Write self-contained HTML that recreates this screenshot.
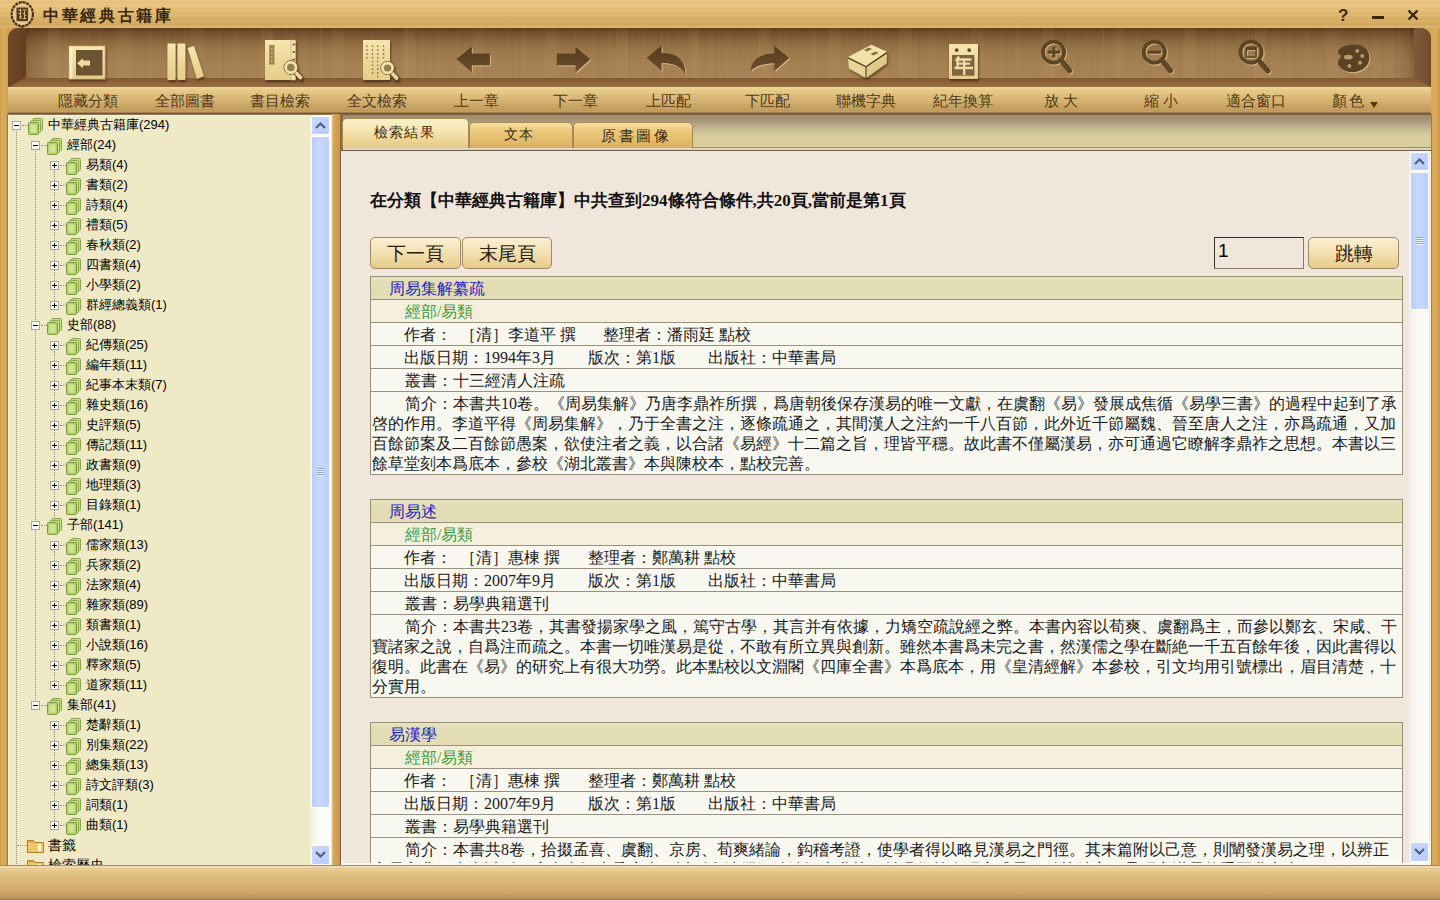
<!DOCTYPE html>
<html><head><meta charset="utf-8">
<style>
*{margin:0;padding:0;box-sizing:border-box}
html,body{width:1440px;height:900px;overflow:hidden}
body{position:relative;font-family:"Liberation Sans",sans-serif;background:#dcb474}
i{font-style:normal;display:inline-block;width:1em;text-align:center;font-family:"Liberation Sans",sans-serif}
.nocjk i{-webkit-text-fill-color:transparent;background:linear-gradient(color-mix(in srgb,currentColor var(--a,37%),transparent),color-mix(in srgb,currentColor var(--a,37%),transparent)) 50% 50%/.8em .8em no-repeat}
.nocjk #head{--a:68%}.nocjk #title{--a:68%}.nocjk #left{--a:41%}.nocjk .lb{--a:40%}.nocjk .r1,.nocjk .r2{--a:52%}.nocjk .tab{--a:42%}
.a{position:absolute}
#frame{left:0;top:0;width:1440px;height:900px;
 background:linear-gradient(90deg,#c89848 0,#dcac5c 2px,#d8a856 5px,#d2a250 7px,#d8a856 1432px,#dcaa5a 1436px,#c89848 1440px)}
#titlebar{left:0;top:0;width:1440px;height:28px;background:repeating-linear-gradient(180deg,rgba(140,80,20,0) 0 2px,rgba(140,80,20,.035) 2px 3px,rgba(255,240,200,.05) 3px 5px,rgba(140,80,20,0) 5px 7px,rgba(140,80,20,.03) 7px 9px,rgba(140,80,20,0) 9px 11px),linear-gradient(180deg,#e8c47e 0,#e6c27c 8px,#dcb46c 16px,#d2aa5e 25px,#d8b070 27px)}
#title{left:42px;top:5px;font-size:16px;font-weight:bold;color:#3a2810;line-height:22px;}
#title i{width:18.6px}
#logo{line-height:0}
.wc{top:3px;font-size:18px;color:#3a2a12;line-height:22px}
#shelf{left:8px;top:28px;width:1423px;height:60px;border-radius:10px 10px 0 0;overflow:hidden;
 background:linear-gradient(180deg,#5c3c1c 0px,#6c482a 3px,#7a5634 7px,#88643c 12px,#947044 18px,#9e7a4c 26px,#a48052 36px,#a68254 49px)}
#shelf .grain{position:absolute;left:0;top:0;width:100%;height:50px;background:repeating-linear-gradient(90deg,rgba(60,30,0,0.03) 0 1px,rgba(0,0,0,0) 1px 6px,rgba(255,230,180,0.025) 6px 8px,rgba(0,0,0,0) 8px 17px),repeating-linear-gradient(90deg,rgba(0,0,0,0) 0 11px,rgba(60,30,0,0.03) 11px 13px,rgba(0,0,0,0) 13px 22px,rgba(255,220,170,0.03) 22px 23px,rgba(0,0,0,0) 23px 29px),repeating-linear-gradient(90deg,rgba(0,0,0,0) 0 40px,rgba(255,220,160,0.04) 40px 52px,rgba(0,0,0,0) 52px 71px)}
#shelf .lw{position:absolute;left:0;top:0;width:18px;height:60px;background:linear-gradient(90deg,#704628 0,#6a4224 60%,#643e22 100%);clip-path:polygon(0 0,18px 0,18px 49.5px,0 59.5px)}
#shelf .ls{position:absolute;left:18px;top:0;width:24px;height:50px;background:linear-gradient(90deg,rgba(40,20,0,.22),rgba(40,20,0,0))}
#shelf .rs{position:absolute;right:17px;top:0;width:24px;height:50px;background:linear-gradient(270deg,rgba(40,20,0,.22),rgba(40,20,0,0))}
#shelf .lwf{position:absolute;left:0;top:38px;width:0;height:0;border-top:12px solid transparent;border-left:18px solid #8e6640}
#shelf .rw{position:absolute;right:0;top:0;width:17px;height:60px;background:linear-gradient(90deg,#7e5a38 0,#785232 60%,#6e4a2c 100%);clip-path:polygon(0 0,17px 0,17px 59.5px,0 49.5px)}
#shelf .fl{position:absolute;left:0;top:50px;width:1423px;height:10px;background:linear-gradient(180deg,#845830 0,#8e6238 40%,#9a7244 100%)}
#front{left:8px;top:87px;width:1423px;height:27px;background:repeating-linear-gradient(180deg,rgba(140,80,20,0) 0 3px,rgba(140,80,20,.03) 3px 4px,rgba(255,240,200,.05) 4px 6px,rgba(140,80,20,0) 6px 10px),linear-gradient(180deg,#f0d898 0,#e4c484 5px,#d8b474 13px,#c8a462 19px,#c09a5c 25px,#7a5634 26px,#7a5634 27px)}
.lb{top:90px;width:120px;text-align:center;font-size:15px;line-height:22px;color:#4e3818;white-space:nowrap}
.lb .dd{display:inline-block;width:0;height:0;border-left:4px solid transparent;border-right:4px solid transparent;border-top:6px solid #4e3818;margin-left:5px;vertical-align:-2px}
.w185 i{width:18.6px}.w17 i{width:17px}
.ti{line-height:0}
.ti svg{filter:drop-shadow(1px 2px 1px rgba(50,30,10,0.35))}
/* left panel */
#left{left:8px;top:114px;width:324px;height:751px;background:#efe9c5;border-top:1px solid #8e7450;border-left:1px solid #fff0c8;overflow:hidden;box-shadow:inset 0 1px 0 #faf6e4}
.xb{position:absolute;width:9px;height:9px;border:1px solid #a8a8a0;background:#fdfdf8}
.xb .h{position:absolute;left:1px;top:3px;width:5px;height:1px;background:#000}
.xb .v{position:absolute;left:3px;top:1px;width:1px;height:5px;background:#000}
.dh{position:absolute;height:1px;border-top:1px dotted #96907a}
.dv{position:absolute;width:1px;border-left:1px dotted #96907a}
.ic{position:absolute;line-height:0}
.tl{position:absolute;height:20px;line-height:20px;font-size:13px;color:#000;white-space:nowrap}
#lsb{position:absolute;left:300px;top:0;width:22px;height:750px;background:linear-gradient(90deg,#efe9c5 0,#f8f6ee 5px,#fefefc 100%)}
.sbb{position:absolute;left:2px;width:19px;height:20px;border-radius:2px;background:linear-gradient(135deg,#cad8fc,#b8cbf8);border:1px solid #fff}
.sbb svg{position:absolute;left:3px;top:4px}
.thumb{position:absolute;left:2px;width:19px;border-radius:2px;border:1px solid #fff;background:linear-gradient(90deg,#b8ccf8 0,#c9d9fd 40%,#bcd0fb 100%)}
.grip{position:absolute;left:5px;top:50%;margin-top:-4px;width:7px;height:8px;background:repeating-linear-gradient(180deg,#8ea4d4 0 1px,#eef4ff 1px 2px)}
#sep{left:332px;top:114px;width:8px;height:751px;background:linear-gradient(90deg,#e8d0a8 0,#d8a858 1px,#d4a050 50%,#c89848 100%)}
/* right panel */
#tabs{left:340px;top:114px;width:1092px;height:37px;background:linear-gradient(180deg,#a08868 0,#a89878 7px,#b8a888 11px,#c8bc98 16px,#d8cc9c 22px,#dccf9e 32px,#dccf9e 33px,#9a8c68 33px,#9a8c68 34px,#e8dcc0 34px,#d8cca8 36px,#6e6050 36px);border-left:3px solid #8a6a48}
.tab{position:absolute;border-radius:5px 5px 0 0;border:1px solid #a88850;border-bottom:none;font-size:15px;color:#3a2a10;text-align:center;white-space:nowrap}
.tt{position:absolute;line-height:16px;color:#3a2a10;white-space:nowrap}
.tt .w153 i{width:15.3px}.tt .w15 i{width:15px}.tt .w175 i{width:17.5px}
.tab.on{background:linear-gradient(180deg,#faf0c8 0,#f6e6b4 40%,#ecd494 75%,#e6ca80 100%)}
.tab.off{background:linear-gradient(180deg,#f6e0a0 0,#ecca80 30%,#e2bc6c 70%,#d8b062 100%)}
#content{left:340px;top:150px;width:1092px;height:715px;background:#f0e6dc;border-top:1px solid #6e6050;border-left:1px solid #6e6048;overflow:hidden}
#head{left:370px;top:191px;font-family:"Liberation Serif",serif;font-weight:bold;font-size:17px;line-height:20px;color:#111;white-space:nowrap}
.btn{height:32px;border:1px solid #a08860;border-radius:5px;background:linear-gradient(180deg,#faf0d4 0,#f4e2b4 45%,#e8ca8a 100%);font-size:19px;line-height:31px;text-align:center;color:#2a2010;white-space:nowrap}
#pg{left:1214px;top:237px;width:90px;height:32px;border:1px solid #8a7a60;border-top-color:#303030;border-left-color:#303030;background:#f0e6dc;font-size:19px;line-height:26px;padding-left:3px;color:#000}
.rec{width:1033px;border:1px solid #9a8e70;background:#f8f7f0;font-family:"Liberation Serif",serif}
.r{position:relative;height:23px;border-bottom:1px solid #9a9080;font-size:16px;line-height:24px;color:#1a1a1a}
.r1{background:linear-gradient(180deg,#e8e2c0 0,#e2ddb4 30%,#e2dcb2 85%,#e6dcb8 100%)}
.r2{background:#f4f0dc}
.r6{height:82px;border-bottom:none}
.tx{position:absolute;top:0;white-space:nowrap}
.il{position:absolute;white-space:nowrap;line-height:20px;height:20px}
#rsb{left:1408px;top:151px;width:21px;height:712px;background:linear-gradient(90deg,#f0e6dc 0,#f6f4ee 4px,#fcfcfa 100%)}
#bottom{left:0;top:865px;width:1440px;height:35px;background:repeating-linear-gradient(180deg,rgba(120,70,20,0) 0 3px,rgba(120,70,20,.04) 3px 4px,rgba(255,240,200,.05) 4px 6px,rgba(120,70,20,0) 6px 9px),linear-gradient(180deg,#9a8a70 0,#9a8a70 1px,#fce4c0 1px,#f0d8a8 2px,#e6c88c 5px,#dcb878 15px,#d2aa6a 25px,#c49c60 31px,#b08858 34px,#a07850 35px)}
</style></head><body>
<div id="frame" class="a"></div>
<div id="titlebar" class="a"></div>
<div id="logo" class="a" style="left:10px;top:1px"><svg width="26" height="28" viewBox="0 0 26 28"><ellipse cx="12.3" cy="13.2" rx="10.6" ry="12" fill="#dcbc80" stroke="#4a3010" stroke-width="2.2" stroke-dasharray="3 0.8"/><ellipse cx="12.3" cy="13.2" rx="8.2" ry="9.6" fill="none" stroke="#ecd098" stroke-width="1.4"/><rect x="6.5" y="6.5" width="11.6" height="13.6" fill="#5a3c18"/><path d="M8.5 9h3M13 9h3.5M8.5 12.5h2.5M12.5 12l3.5 3M9 16h3M13 17.5h3M10.5 8v10M14.5 10v8" stroke="#d8bc84" stroke-width="1"/><path d="M12.3 25v2.5" stroke="#4a3010" stroke-width="1.5"/></svg></div>
<div id="title" class="a"><i>中</i><i>華</i><i>經</i><i>典</i><i>古</i><i>籍</i><i>庫</i></div>
<div class="a wc" style="left:1338px;top:6px;font-size:17px;font-weight:bold;line-height:20px">?</div>
<div class="a" style="left:1372px;top:16px;width:12px;height:2.5px;background:#3a2810"></div>
<svg class="a" style="left:1405px;top:7px" width="16" height="16" viewBox="0 0 16 16"><path d="M3.5 3.5L12.5 12.5M12.5 3.5L3.5 12.5" stroke="#3a2810" stroke-width="2.4"/></svg>
<div id="shelf" class="a"><div class="grain"></div><div class="fl"></div><div class="ls"></div><div class="rs"></div><div class="lw"></div><div class="rw"></div></div>
<div id="front" class="a"></div>
<svg class="a" style="left:0;top:0" width="1440" height="90" viewBox="0 0 1440 90">
<defs>
<linearGradient id="gd" x1="0" y1="0" x2="0" y2="1"><stop offset="0" stop-color="#f6e6b0"/><stop offset="1" stop-color="#e6cc88"/></linearGradient>
<linearGradient id="gd2" x1="0" y1="0" x2="1" y2="1"><stop offset="0" stop-color="#f8eab8"/><stop offset="1" stop-color="#dcc078"/></linearGradient>
<linearGradient id="dk" x1="0" y1="0" x2="0" y2="1"><stop offset="0" stop-color="#553a1c"/><stop offset="1" stop-color="#6c5030"/></linearGradient>
<filter id="sh" x="-20%" y="-20%" width="140%" height="140%"><feGaussianBlur in="SourceAlpha" stdDeviation="1.2"/><feOffset dx="1" dy="2"/><feComponentTransfer><feFuncA type="linear" slope="0.45"/></feComponentTransfer><feMerge><feMergeNode/><feMergeNode in="SourceGraphic"/></feMerge></filter>
<filter id="hl" x="-20%" y="-20%" width="140%" height="140%"><feOffset in="SourceAlpha" dx="0.8" dy="1" result="o"/><feFlood flood-color="#e8c890" flood-opacity="0.7"/><feComposite in2="o" operator="in" result="h"/><feMerge><feMergeNode in="h"/><feMergeNode in="SourceGraphic"/></feMerge></filter>
</defs>
<g filter="url(#sh)">
 <!-- hide -->
 <rect x="69" y="46" width="36" height="33" fill="url(#gd)" stroke="#c8a868" stroke-width="0.6"/>
 <rect x="69.5" y="46.5" width="3" height="32" fill="#faf0c8"/>
 <rect x="76" y="50" width="26.5" height="25.5" fill="#6c5232"/>
 <path d="M77 63.2L83 58.2V60.6H90V65.6H83V68.2Z" fill="#f0dca0"/>
 <!-- books -->
 <rect x="167.5" y="43.5" width="8" height="36.5" rx="0.8" fill="url(#gd)"/>
 <rect x="177.5" y="43.5" width="7.8" height="36.5" rx="0.8" fill="url(#gd)"/>
 <path d="M187.7 48L194 46L203.8 76L197 79Z" fill="url(#gd)"/>
 <!-- book search -->
 <rect x="265" y="40" width="30.5" height="40" fill="url(#gd)"/>
 <rect x="291" y="40" width="4.5" height="40" fill="#f2e2b0" stroke="#b89a5c" stroke-width="0.5"/>
 <rect x="269.2" y="45" width="5.2" height="19.6" fill="#9c8450"/>
 <path d="M271.8 48v1.5M271.8 52v1.5M271.8 56v1.5M271.8 60v1.5" stroke="#e8d49c" stroke-width="1"/>
 <path d="M292.5 44.5h2.5M292.5 52h2.5M292.5 59.5h2.5" stroke="#6a5434" stroke-width="1.4"/>
 <path d="M295 71.8L300.5 77.5" stroke="#5a4424" stroke-width="5.6" stroke-linecap="round"/>
 <path d="M295 71.8L300.5 77.5" stroke="#eed8a0" stroke-width="3.8" stroke-linecap="round"/>
 <circle cx="290.8" cy="67.5" r="6.8" fill="none" stroke="#5a4424" stroke-width="1"/>
 <circle cx="290.8" cy="67.5" r="5.2" fill="#8a7048" fill-opacity="0.85" stroke="#f2e0a8" stroke-width="2.8"/>
 <!-- full text search -->
 <rect x="363" y="40" width="27" height="40" fill="url(#gd)"/>
 <path d="M367 45.5v15M372.5 45.5v30M377.7 45.5v32M383.5 45.5v15" stroke="#8c7444" stroke-width="1.4" stroke-dasharray="1.6 2.2"/>
 <path d="M391.5 72.5L396.5 78" stroke="#5a4424" stroke-width="5.6" stroke-linecap="round"/>
 <path d="M391.5 72.5L396.5 78" stroke="#eed8a0" stroke-width="3.8" stroke-linecap="round"/>
 <circle cx="387.5" cy="68" r="6.6" fill="none" stroke="#5a4424" stroke-width="1"/>
 <circle cx="387.5" cy="68" r="5" fill="#8a7048" fill-opacity="0.85" stroke="#f2e0a8" stroke-width="2.8"/>
 <!-- dict -->
 <path d="M848 57L871.3 44.8L887 51.7L866 66.3Z" fill="#f2e2aa"/>
 <path d="M848 57.5L866 66.8V78L849 68.5Z" fill="#e8d494"/>
 <path d="M866 66.8L887 52.5L886.5 63.5L866 78Z" fill="#e2c886"/>
 <path d="M848 57.8L866 66.8L887 52.6" stroke="#5a4424" stroke-width="1.4" fill="none"/>
 <path d="M866 66.8V77.8" stroke="#5a4424" stroke-width="1.2"/>
 <path d="M864 50l5 -2.5 3 1.5 -5 2.5z M870.5 54l5 -2.5 3 1.5 -5 2.5z" fill="#8a7040"/>
 <!-- calendar -->
 <rect x="949" y="44" width="29" height="35" rx="1" fill="url(#gd)"/>
 <circle cx="956.7" cy="50.1" r="1.9" fill="#5a4424"/>
 <circle cx="969.2" cy="50.1" r="1.9" fill="#5a4424"/>
 <rect x="952" y="55" width="22.4" height="20.7" fill="#806440"/>
 <path d="M959 56.5L955.8 61M957.5 59.5H971.5M957.5 59.5V68M957.5 63.6H970M954.5 68H973M964.2 59.5V75" stroke="#f0dca0" stroke-width="2.3" fill="none"/>
</g>
<g filter="url(#hl)">
 <path d="M456.3 59.3L471.9 46.8V53.5H490V65.5H471.9V72.8Z" fill="url(#dk)"/>
 <path d="M590.6 59.3L575.5 46.8V53.5H556.8V65.5H575.5V72.8Z" fill="url(#dk)"/>
 <path d="M646.7 58L661.7 45.2V53C675 53 686 58 685.5 74.7C681 66.5 673 63 661.7 63V71.3Z" fill="url(#dk)"/>
 <path d="M789.4 58L774.4 45.8V53.6C761 53.6 751 59 750.6 71.3C755 66.5 763 63.6 774.4 63.6V71.3Z" fill="url(#dk)"/>
 <circle cx="1053.6" cy="52.2" r="10.6" fill="none" stroke="#5c4426" stroke-width="3.8"/>
 <path d="M1047.8 52.2H1060M1053.9 46.7V57.8" stroke="#5c4426" stroke-width="3.2"/>
 <path d="M1063 62.5L1069.5 70.5" stroke="#5e4628" stroke-width="5.6" stroke-linecap="round"/>
 <circle cx="1154.4" cy="52.2" r="10.6" fill="none" stroke="#5c4426" stroke-width="3.8"/>
 <path d="M1148 52.2H1161" stroke="#5c4426" stroke-width="3.2"/>
 <path d="M1163.8 62.5L1170.3 70.5" stroke="#5e4628" stroke-width="5.6" stroke-linecap="round"/>
 <circle cx="1251.1" cy="52.2" r="10.6" fill="none" stroke="#5c4426" stroke-width="3.8"/>
 <rect x="1246.3" y="47.5" width="9.8" height="9.6" fill="none" stroke="#5c4426" stroke-width="1.6"/>
 <path d="M1246.3 48.8H1256.1" stroke="#5c4426" stroke-width="2.6"/>
 <path d="M1260.5 62.5L1267.8 70.8" stroke="#5e4628" stroke-width="5.6" stroke-linecap="round"/>
 <path d="M1355 44.5C1364 44.5 1369.5 50 1369.5 57.5C1369.5 66 1362 72.2 1352.5 72.2C1344 72.2 1338 68 1338 62C1338 59.5 1341 58.5 1341 56.5C1341 55 1338 54.5 1338 52.5C1338 48 1345 44.5 1355 44.5Z" fill="#5a4224"/>
 <ellipse cx="1348.3" cy="57.2" rx="4.3" ry="2.4" fill="#b89a68"/>
 <circle cx="1357.2" cy="51.1" r="2" fill="#b89a68"/>
 <circle cx="1362.2" cy="56.1" r="2" fill="#b89a68"/>
 <circle cx="1360" cy="62.8" r="2" fill="#b89a68"/>
 <circle cx="1349.4" cy="66.1" r="2" fill="#b89a68"/>
</g>
</svg>

<div class="a lb" style="left:28px"><i>隱</i><i>藏</i><i>分</i><i>類</i></div>
<div class="a lb" style="left:125px"><i>全</i><i>部</i><i>圖</i><i>書</i></div>
<div class="a lb" style="left:220px"><i>書</i><i>目</i><i>檢</i><i>索</i></div>
<div class="a lb" style="left:317px"><i>全</i><i>文</i><i>檢</i><i>索</i></div>
<div class="a lb" style="left:416px"><i>上</i><i>一</i><i>章</i></div>
<div class="a lb" style="left:515px"><i>下</i><i>一</i><i>章</i></div>
<div class="a lb" style="left:608px"><i>上</i><i>匹</i><i>配</i></div>
<div class="a lb" style="left:707px"><i>下</i><i>匹</i><i>配</i></div>
<div class="a lb" style="left:806px"><i>聯</i><i>機</i><i>字</i><i>典</i></div>
<div class="a lb" style="left:903px"><i>紀</i><i>年</i><i>換</i><i>算</i></div>
<div class="a lb w185" style="left:1001px"><i>放</i><i>大</i></div>
<div class="a lb w185" style="left:1101px"><i>縮</i><i>小</i></div>
<div class="a lb" style="left:1196px"><i>適</i><i>合</i><i>窗</i><i>口</i></div>
<div class="a lb w17" style="left:1294px"><i>顏</i><i>色</i><b class="dd"></b></div>
<div id="left" class="a">
<div class="dv" style="left:7px;top:16px;height:735px"></div>
<div class="dv" style="left:26px;top:36px;height:553px"></div>
<div class="dv" style="left:45px;top:56px;height:136px"></div>
<div class="dv" style="left:45px;top:236px;height:176px"></div>
<div class="dv" style="left:45px;top:436px;height:136px"></div>
<div class="dv" style="left:45px;top:616px;height:96px"></div>
<div class="xb" style="left:3px;top:6px"><b class="h"></b></div><div class="dh" style="left:13px;top:10px;width:6px"></div><div class="ic" style="left:19px;top:3px"><svg class="bk" width="15" height="17" viewBox="0 0 15 17"><rect x="5" y="0.5" width="9.5" height="12" rx="1" fill="#c4dc84" stroke="#86a848" stroke-width="1"/><rect x="3" y="2.5" width="9.5" height="12" rx="1" fill="#cce28c" stroke="#86a848" stroke-width="1"/><rect x="0.5" y="4.5" width="10" height="12" rx="1" fill="#b4d06c" stroke="#7a9c3c" stroke-width="1"/><rect x="2.5" y="6.5" width="6" height="8" fill="#d0e494"/></svg></div><div class="tl" style="left:39px;top:0px"><i>中</i><i>華</i><i>經</i><i>典</i><i>古</i><i>籍</i><i>庫</i>(294)</div>
<div class="xb" style="left:22px;top:26px"><b class="h"></b></div><div class="dh" style="left:32px;top:30px;width:6px"></div><div class="ic" style="left:38px;top:23px"><svg class="bk" width="15" height="17" viewBox="0 0 15 17"><rect x="5" y="0.5" width="9.5" height="12" rx="1" fill="#c4dc84" stroke="#86a848" stroke-width="1"/><rect x="3" y="2.5" width="9.5" height="12" rx="1" fill="#cce28c" stroke="#86a848" stroke-width="1"/><rect x="0.5" y="4.5" width="10" height="12" rx="1" fill="#b4d06c" stroke="#7a9c3c" stroke-width="1"/><rect x="2.5" y="6.5" width="6" height="8" fill="#d0e494"/></svg></div><div class="tl" style="left:58px;top:20px"><i>經</i><i>部</i>(24)</div>
<div class="xb" style="left:41px;top:46px"><b class="h"></b><b class="v"></b></div><div class="dh" style="left:51px;top:50px;width:6px"></div><div class="ic" style="left:57px;top:43px"><svg class="bk" width="15" height="17" viewBox="0 0 15 17"><rect x="5" y="0.5" width="9.5" height="12" rx="1" fill="#c4dc84" stroke="#86a848" stroke-width="1"/><rect x="3" y="2.5" width="9.5" height="12" rx="1" fill="#cce28c" stroke="#86a848" stroke-width="1"/><rect x="0.5" y="4.5" width="10" height="12" rx="1" fill="#b4d06c" stroke="#7a9c3c" stroke-width="1"/><rect x="2.5" y="6.5" width="6" height="8" fill="#d0e494"/></svg></div><div class="tl" style="left:77px;top:40px"><i>易</i><i>類</i>(4)</div>
<div class="xb" style="left:41px;top:66px"><b class="h"></b><b class="v"></b></div><div class="dh" style="left:51px;top:70px;width:6px"></div><div class="ic" style="left:57px;top:63px"><svg class="bk" width="15" height="17" viewBox="0 0 15 17"><rect x="5" y="0.5" width="9.5" height="12" rx="1" fill="#c4dc84" stroke="#86a848" stroke-width="1"/><rect x="3" y="2.5" width="9.5" height="12" rx="1" fill="#cce28c" stroke="#86a848" stroke-width="1"/><rect x="0.5" y="4.5" width="10" height="12" rx="1" fill="#b4d06c" stroke="#7a9c3c" stroke-width="1"/><rect x="2.5" y="6.5" width="6" height="8" fill="#d0e494"/></svg></div><div class="tl" style="left:77px;top:60px"><i>書</i><i>類</i>(2)</div>
<div class="xb" style="left:41px;top:86px"><b class="h"></b><b class="v"></b></div><div class="dh" style="left:51px;top:90px;width:6px"></div><div class="ic" style="left:57px;top:83px"><svg class="bk" width="15" height="17" viewBox="0 0 15 17"><rect x="5" y="0.5" width="9.5" height="12" rx="1" fill="#c4dc84" stroke="#86a848" stroke-width="1"/><rect x="3" y="2.5" width="9.5" height="12" rx="1" fill="#cce28c" stroke="#86a848" stroke-width="1"/><rect x="0.5" y="4.5" width="10" height="12" rx="1" fill="#b4d06c" stroke="#7a9c3c" stroke-width="1"/><rect x="2.5" y="6.5" width="6" height="8" fill="#d0e494"/></svg></div><div class="tl" style="left:77px;top:80px"><i>詩</i><i>類</i>(4)</div>
<div class="xb" style="left:41px;top:106px"><b class="h"></b><b class="v"></b></div><div class="dh" style="left:51px;top:110px;width:6px"></div><div class="ic" style="left:57px;top:103px"><svg class="bk" width="15" height="17" viewBox="0 0 15 17"><rect x="5" y="0.5" width="9.5" height="12" rx="1" fill="#c4dc84" stroke="#86a848" stroke-width="1"/><rect x="3" y="2.5" width="9.5" height="12" rx="1" fill="#cce28c" stroke="#86a848" stroke-width="1"/><rect x="0.5" y="4.5" width="10" height="12" rx="1" fill="#b4d06c" stroke="#7a9c3c" stroke-width="1"/><rect x="2.5" y="6.5" width="6" height="8" fill="#d0e494"/></svg></div><div class="tl" style="left:77px;top:100px"><i>禮</i><i>類</i>(5)</div>
<div class="xb" style="left:41px;top:126px"><b class="h"></b><b class="v"></b></div><div class="dh" style="left:51px;top:130px;width:6px"></div><div class="ic" style="left:57px;top:123px"><svg class="bk" width="15" height="17" viewBox="0 0 15 17"><rect x="5" y="0.5" width="9.5" height="12" rx="1" fill="#c4dc84" stroke="#86a848" stroke-width="1"/><rect x="3" y="2.5" width="9.5" height="12" rx="1" fill="#cce28c" stroke="#86a848" stroke-width="1"/><rect x="0.5" y="4.5" width="10" height="12" rx="1" fill="#b4d06c" stroke="#7a9c3c" stroke-width="1"/><rect x="2.5" y="6.5" width="6" height="8" fill="#d0e494"/></svg></div><div class="tl" style="left:77px;top:120px"><i>春</i><i>秋</i><i>類</i>(2)</div>
<div class="xb" style="left:41px;top:146px"><b class="h"></b><b class="v"></b></div><div class="dh" style="left:51px;top:150px;width:6px"></div><div class="ic" style="left:57px;top:143px"><svg class="bk" width="15" height="17" viewBox="0 0 15 17"><rect x="5" y="0.5" width="9.5" height="12" rx="1" fill="#c4dc84" stroke="#86a848" stroke-width="1"/><rect x="3" y="2.5" width="9.5" height="12" rx="1" fill="#cce28c" stroke="#86a848" stroke-width="1"/><rect x="0.5" y="4.5" width="10" height="12" rx="1" fill="#b4d06c" stroke="#7a9c3c" stroke-width="1"/><rect x="2.5" y="6.5" width="6" height="8" fill="#d0e494"/></svg></div><div class="tl" style="left:77px;top:140px"><i>四</i><i>書</i><i>類</i>(4)</div>
<div class="xb" style="left:41px;top:166px"><b class="h"></b><b class="v"></b></div><div class="dh" style="left:51px;top:170px;width:6px"></div><div class="ic" style="left:57px;top:163px"><svg class="bk" width="15" height="17" viewBox="0 0 15 17"><rect x="5" y="0.5" width="9.5" height="12" rx="1" fill="#c4dc84" stroke="#86a848" stroke-width="1"/><rect x="3" y="2.5" width="9.5" height="12" rx="1" fill="#cce28c" stroke="#86a848" stroke-width="1"/><rect x="0.5" y="4.5" width="10" height="12" rx="1" fill="#b4d06c" stroke="#7a9c3c" stroke-width="1"/><rect x="2.5" y="6.5" width="6" height="8" fill="#d0e494"/></svg></div><div class="tl" style="left:77px;top:160px"><i>小</i><i>學</i><i>類</i>(2)</div>
<div class="xb" style="left:41px;top:186px"><b class="h"></b><b class="v"></b></div><div class="dh" style="left:51px;top:190px;width:6px"></div><div class="ic" style="left:57px;top:183px"><svg class="bk" width="15" height="17" viewBox="0 0 15 17"><rect x="5" y="0.5" width="9.5" height="12" rx="1" fill="#c4dc84" stroke="#86a848" stroke-width="1"/><rect x="3" y="2.5" width="9.5" height="12" rx="1" fill="#cce28c" stroke="#86a848" stroke-width="1"/><rect x="0.5" y="4.5" width="10" height="12" rx="1" fill="#b4d06c" stroke="#7a9c3c" stroke-width="1"/><rect x="2.5" y="6.5" width="6" height="8" fill="#d0e494"/></svg></div><div class="tl" style="left:77px;top:180px"><i>群</i><i>經</i><i>總</i><i>義</i><i>類</i>(1)</div>
<div class="xb" style="left:22px;top:206px"><b class="h"></b></div><div class="dh" style="left:32px;top:210px;width:6px"></div><div class="ic" style="left:38px;top:203px"><svg class="bk" width="15" height="17" viewBox="0 0 15 17"><rect x="5" y="0.5" width="9.5" height="12" rx="1" fill="#c4dc84" stroke="#86a848" stroke-width="1"/><rect x="3" y="2.5" width="9.5" height="12" rx="1" fill="#cce28c" stroke="#86a848" stroke-width="1"/><rect x="0.5" y="4.5" width="10" height="12" rx="1" fill="#b4d06c" stroke="#7a9c3c" stroke-width="1"/><rect x="2.5" y="6.5" width="6" height="8" fill="#d0e494"/></svg></div><div class="tl" style="left:58px;top:200px"><i>史</i><i>部</i>(88)</div>
<div class="xb" style="left:41px;top:226px"><b class="h"></b><b class="v"></b></div><div class="dh" style="left:51px;top:230px;width:6px"></div><div class="ic" style="left:57px;top:223px"><svg class="bk" width="15" height="17" viewBox="0 0 15 17"><rect x="5" y="0.5" width="9.5" height="12" rx="1" fill="#c4dc84" stroke="#86a848" stroke-width="1"/><rect x="3" y="2.5" width="9.5" height="12" rx="1" fill="#cce28c" stroke="#86a848" stroke-width="1"/><rect x="0.5" y="4.5" width="10" height="12" rx="1" fill="#b4d06c" stroke="#7a9c3c" stroke-width="1"/><rect x="2.5" y="6.5" width="6" height="8" fill="#d0e494"/></svg></div><div class="tl" style="left:77px;top:220px"><i>紀</i><i>傳</i><i>類</i>(25)</div>
<div class="xb" style="left:41px;top:246px"><b class="h"></b><b class="v"></b></div><div class="dh" style="left:51px;top:250px;width:6px"></div><div class="ic" style="left:57px;top:243px"><svg class="bk" width="15" height="17" viewBox="0 0 15 17"><rect x="5" y="0.5" width="9.5" height="12" rx="1" fill="#c4dc84" stroke="#86a848" stroke-width="1"/><rect x="3" y="2.5" width="9.5" height="12" rx="1" fill="#cce28c" stroke="#86a848" stroke-width="1"/><rect x="0.5" y="4.5" width="10" height="12" rx="1" fill="#b4d06c" stroke="#7a9c3c" stroke-width="1"/><rect x="2.5" y="6.5" width="6" height="8" fill="#d0e494"/></svg></div><div class="tl" style="left:77px;top:240px"><i>編</i><i>年</i><i>類</i>(11)</div>
<div class="xb" style="left:41px;top:266px"><b class="h"></b><b class="v"></b></div><div class="dh" style="left:51px;top:270px;width:6px"></div><div class="ic" style="left:57px;top:263px"><svg class="bk" width="15" height="17" viewBox="0 0 15 17"><rect x="5" y="0.5" width="9.5" height="12" rx="1" fill="#c4dc84" stroke="#86a848" stroke-width="1"/><rect x="3" y="2.5" width="9.5" height="12" rx="1" fill="#cce28c" stroke="#86a848" stroke-width="1"/><rect x="0.5" y="4.5" width="10" height="12" rx="1" fill="#b4d06c" stroke="#7a9c3c" stroke-width="1"/><rect x="2.5" y="6.5" width="6" height="8" fill="#d0e494"/></svg></div><div class="tl" style="left:77px;top:260px"><i>紀</i><i>事</i><i>本</i><i>末</i><i>類</i>(7)</div>
<div class="xb" style="left:41px;top:286px"><b class="h"></b><b class="v"></b></div><div class="dh" style="left:51px;top:290px;width:6px"></div><div class="ic" style="left:57px;top:283px"><svg class="bk" width="15" height="17" viewBox="0 0 15 17"><rect x="5" y="0.5" width="9.5" height="12" rx="1" fill="#c4dc84" stroke="#86a848" stroke-width="1"/><rect x="3" y="2.5" width="9.5" height="12" rx="1" fill="#cce28c" stroke="#86a848" stroke-width="1"/><rect x="0.5" y="4.5" width="10" height="12" rx="1" fill="#b4d06c" stroke="#7a9c3c" stroke-width="1"/><rect x="2.5" y="6.5" width="6" height="8" fill="#d0e494"/></svg></div><div class="tl" style="left:77px;top:280px"><i>雜</i><i>史</i><i>類</i>(16)</div>
<div class="xb" style="left:41px;top:306px"><b class="h"></b><b class="v"></b></div><div class="dh" style="left:51px;top:310px;width:6px"></div><div class="ic" style="left:57px;top:303px"><svg class="bk" width="15" height="17" viewBox="0 0 15 17"><rect x="5" y="0.5" width="9.5" height="12" rx="1" fill="#c4dc84" stroke="#86a848" stroke-width="1"/><rect x="3" y="2.5" width="9.5" height="12" rx="1" fill="#cce28c" stroke="#86a848" stroke-width="1"/><rect x="0.5" y="4.5" width="10" height="12" rx="1" fill="#b4d06c" stroke="#7a9c3c" stroke-width="1"/><rect x="2.5" y="6.5" width="6" height="8" fill="#d0e494"/></svg></div><div class="tl" style="left:77px;top:300px"><i>史</i><i>評</i><i>類</i>(5)</div>
<div class="xb" style="left:41px;top:326px"><b class="h"></b><b class="v"></b></div><div class="dh" style="left:51px;top:330px;width:6px"></div><div class="ic" style="left:57px;top:323px"><svg class="bk" width="15" height="17" viewBox="0 0 15 17"><rect x="5" y="0.5" width="9.5" height="12" rx="1" fill="#c4dc84" stroke="#86a848" stroke-width="1"/><rect x="3" y="2.5" width="9.5" height="12" rx="1" fill="#cce28c" stroke="#86a848" stroke-width="1"/><rect x="0.5" y="4.5" width="10" height="12" rx="1" fill="#b4d06c" stroke="#7a9c3c" stroke-width="1"/><rect x="2.5" y="6.5" width="6" height="8" fill="#d0e494"/></svg></div><div class="tl" style="left:77px;top:320px"><i>傳</i><i>記</i><i>類</i>(11)</div>
<div class="xb" style="left:41px;top:346px"><b class="h"></b><b class="v"></b></div><div class="dh" style="left:51px;top:350px;width:6px"></div><div class="ic" style="left:57px;top:343px"><svg class="bk" width="15" height="17" viewBox="0 0 15 17"><rect x="5" y="0.5" width="9.5" height="12" rx="1" fill="#c4dc84" stroke="#86a848" stroke-width="1"/><rect x="3" y="2.5" width="9.5" height="12" rx="1" fill="#cce28c" stroke="#86a848" stroke-width="1"/><rect x="0.5" y="4.5" width="10" height="12" rx="1" fill="#b4d06c" stroke="#7a9c3c" stroke-width="1"/><rect x="2.5" y="6.5" width="6" height="8" fill="#d0e494"/></svg></div><div class="tl" style="left:77px;top:340px"><i>政</i><i>書</i><i>類</i>(9)</div>
<div class="xb" style="left:41px;top:366px"><b class="h"></b><b class="v"></b></div><div class="dh" style="left:51px;top:370px;width:6px"></div><div class="ic" style="left:57px;top:363px"><svg class="bk" width="15" height="17" viewBox="0 0 15 17"><rect x="5" y="0.5" width="9.5" height="12" rx="1" fill="#c4dc84" stroke="#86a848" stroke-width="1"/><rect x="3" y="2.5" width="9.5" height="12" rx="1" fill="#cce28c" stroke="#86a848" stroke-width="1"/><rect x="0.5" y="4.5" width="10" height="12" rx="1" fill="#b4d06c" stroke="#7a9c3c" stroke-width="1"/><rect x="2.5" y="6.5" width="6" height="8" fill="#d0e494"/></svg></div><div class="tl" style="left:77px;top:360px"><i>地</i><i>理</i><i>類</i>(3)</div>
<div class="xb" style="left:41px;top:386px"><b class="h"></b><b class="v"></b></div><div class="dh" style="left:51px;top:390px;width:6px"></div><div class="ic" style="left:57px;top:383px"><svg class="bk" width="15" height="17" viewBox="0 0 15 17"><rect x="5" y="0.5" width="9.5" height="12" rx="1" fill="#c4dc84" stroke="#86a848" stroke-width="1"/><rect x="3" y="2.5" width="9.5" height="12" rx="1" fill="#cce28c" stroke="#86a848" stroke-width="1"/><rect x="0.5" y="4.5" width="10" height="12" rx="1" fill="#b4d06c" stroke="#7a9c3c" stroke-width="1"/><rect x="2.5" y="6.5" width="6" height="8" fill="#d0e494"/></svg></div><div class="tl" style="left:77px;top:380px"><i>目</i><i>錄</i><i>類</i>(1)</div>
<div class="xb" style="left:22px;top:406px"><b class="h"></b></div><div class="dh" style="left:32px;top:410px;width:6px"></div><div class="ic" style="left:38px;top:403px"><svg class="bk" width="15" height="17" viewBox="0 0 15 17"><rect x="5" y="0.5" width="9.5" height="12" rx="1" fill="#c4dc84" stroke="#86a848" stroke-width="1"/><rect x="3" y="2.5" width="9.5" height="12" rx="1" fill="#cce28c" stroke="#86a848" stroke-width="1"/><rect x="0.5" y="4.5" width="10" height="12" rx="1" fill="#b4d06c" stroke="#7a9c3c" stroke-width="1"/><rect x="2.5" y="6.5" width="6" height="8" fill="#d0e494"/></svg></div><div class="tl" style="left:58px;top:400px"><i>子</i><i>部</i>(141)</div>
<div class="xb" style="left:41px;top:426px"><b class="h"></b><b class="v"></b></div><div class="dh" style="left:51px;top:430px;width:6px"></div><div class="ic" style="left:57px;top:423px"><svg class="bk" width="15" height="17" viewBox="0 0 15 17"><rect x="5" y="0.5" width="9.5" height="12" rx="1" fill="#c4dc84" stroke="#86a848" stroke-width="1"/><rect x="3" y="2.5" width="9.5" height="12" rx="1" fill="#cce28c" stroke="#86a848" stroke-width="1"/><rect x="0.5" y="4.5" width="10" height="12" rx="1" fill="#b4d06c" stroke="#7a9c3c" stroke-width="1"/><rect x="2.5" y="6.5" width="6" height="8" fill="#d0e494"/></svg></div><div class="tl" style="left:77px;top:420px"><i>儒</i><i>家</i><i>類</i>(13)</div>
<div class="xb" style="left:41px;top:446px"><b class="h"></b><b class="v"></b></div><div class="dh" style="left:51px;top:450px;width:6px"></div><div class="ic" style="left:57px;top:443px"><svg class="bk" width="15" height="17" viewBox="0 0 15 17"><rect x="5" y="0.5" width="9.5" height="12" rx="1" fill="#c4dc84" stroke="#86a848" stroke-width="1"/><rect x="3" y="2.5" width="9.5" height="12" rx="1" fill="#cce28c" stroke="#86a848" stroke-width="1"/><rect x="0.5" y="4.5" width="10" height="12" rx="1" fill="#b4d06c" stroke="#7a9c3c" stroke-width="1"/><rect x="2.5" y="6.5" width="6" height="8" fill="#d0e494"/></svg></div><div class="tl" style="left:77px;top:440px"><i>兵</i><i>家</i><i>類</i>(2)</div>
<div class="xb" style="left:41px;top:466px"><b class="h"></b><b class="v"></b></div><div class="dh" style="left:51px;top:470px;width:6px"></div><div class="ic" style="left:57px;top:463px"><svg class="bk" width="15" height="17" viewBox="0 0 15 17"><rect x="5" y="0.5" width="9.5" height="12" rx="1" fill="#c4dc84" stroke="#86a848" stroke-width="1"/><rect x="3" y="2.5" width="9.5" height="12" rx="1" fill="#cce28c" stroke="#86a848" stroke-width="1"/><rect x="0.5" y="4.5" width="10" height="12" rx="1" fill="#b4d06c" stroke="#7a9c3c" stroke-width="1"/><rect x="2.5" y="6.5" width="6" height="8" fill="#d0e494"/></svg></div><div class="tl" style="left:77px;top:460px"><i>法</i><i>家</i><i>類</i>(4)</div>
<div class="xb" style="left:41px;top:486px"><b class="h"></b><b class="v"></b></div><div class="dh" style="left:51px;top:490px;width:6px"></div><div class="ic" style="left:57px;top:483px"><svg class="bk" width="15" height="17" viewBox="0 0 15 17"><rect x="5" y="0.5" width="9.5" height="12" rx="1" fill="#c4dc84" stroke="#86a848" stroke-width="1"/><rect x="3" y="2.5" width="9.5" height="12" rx="1" fill="#cce28c" stroke="#86a848" stroke-width="1"/><rect x="0.5" y="4.5" width="10" height="12" rx="1" fill="#b4d06c" stroke="#7a9c3c" stroke-width="1"/><rect x="2.5" y="6.5" width="6" height="8" fill="#d0e494"/></svg></div><div class="tl" style="left:77px;top:480px"><i>雜</i><i>家</i><i>類</i>(89)</div>
<div class="xb" style="left:41px;top:506px"><b class="h"></b><b class="v"></b></div><div class="dh" style="left:51px;top:510px;width:6px"></div><div class="ic" style="left:57px;top:503px"><svg class="bk" width="15" height="17" viewBox="0 0 15 17"><rect x="5" y="0.5" width="9.5" height="12" rx="1" fill="#c4dc84" stroke="#86a848" stroke-width="1"/><rect x="3" y="2.5" width="9.5" height="12" rx="1" fill="#cce28c" stroke="#86a848" stroke-width="1"/><rect x="0.5" y="4.5" width="10" height="12" rx="1" fill="#b4d06c" stroke="#7a9c3c" stroke-width="1"/><rect x="2.5" y="6.5" width="6" height="8" fill="#d0e494"/></svg></div><div class="tl" style="left:77px;top:500px"><i>類</i><i>書</i><i>類</i>(1)</div>
<div class="xb" style="left:41px;top:526px"><b class="h"></b><b class="v"></b></div><div class="dh" style="left:51px;top:530px;width:6px"></div><div class="ic" style="left:57px;top:523px"><svg class="bk" width="15" height="17" viewBox="0 0 15 17"><rect x="5" y="0.5" width="9.5" height="12" rx="1" fill="#c4dc84" stroke="#86a848" stroke-width="1"/><rect x="3" y="2.5" width="9.5" height="12" rx="1" fill="#cce28c" stroke="#86a848" stroke-width="1"/><rect x="0.5" y="4.5" width="10" height="12" rx="1" fill="#b4d06c" stroke="#7a9c3c" stroke-width="1"/><rect x="2.5" y="6.5" width="6" height="8" fill="#d0e494"/></svg></div><div class="tl" style="left:77px;top:520px"><i>小</i><i>說</i><i>類</i>(16)</div>
<div class="xb" style="left:41px;top:546px"><b class="h"></b><b class="v"></b></div><div class="dh" style="left:51px;top:550px;width:6px"></div><div class="ic" style="left:57px;top:543px"><svg class="bk" width="15" height="17" viewBox="0 0 15 17"><rect x="5" y="0.5" width="9.5" height="12" rx="1" fill="#c4dc84" stroke="#86a848" stroke-width="1"/><rect x="3" y="2.5" width="9.5" height="12" rx="1" fill="#cce28c" stroke="#86a848" stroke-width="1"/><rect x="0.5" y="4.5" width="10" height="12" rx="1" fill="#b4d06c" stroke="#7a9c3c" stroke-width="1"/><rect x="2.5" y="6.5" width="6" height="8" fill="#d0e494"/></svg></div><div class="tl" style="left:77px;top:540px"><i>釋</i><i>家</i><i>類</i>(5)</div>
<div class="xb" style="left:41px;top:566px"><b class="h"></b><b class="v"></b></div><div class="dh" style="left:51px;top:570px;width:6px"></div><div class="ic" style="left:57px;top:563px"><svg class="bk" width="15" height="17" viewBox="0 0 15 17"><rect x="5" y="0.5" width="9.5" height="12" rx="1" fill="#c4dc84" stroke="#86a848" stroke-width="1"/><rect x="3" y="2.5" width="9.5" height="12" rx="1" fill="#cce28c" stroke="#86a848" stroke-width="1"/><rect x="0.5" y="4.5" width="10" height="12" rx="1" fill="#b4d06c" stroke="#7a9c3c" stroke-width="1"/><rect x="2.5" y="6.5" width="6" height="8" fill="#d0e494"/></svg></div><div class="tl" style="left:77px;top:560px"><i>道</i><i>家</i><i>類</i>(11)</div>
<div class="xb" style="left:22px;top:586px"><b class="h"></b></div><div class="dh" style="left:32px;top:590px;width:6px"></div><div class="ic" style="left:38px;top:583px"><svg class="bk" width="15" height="17" viewBox="0 0 15 17"><rect x="5" y="0.5" width="9.5" height="12" rx="1" fill="#c4dc84" stroke="#86a848" stroke-width="1"/><rect x="3" y="2.5" width="9.5" height="12" rx="1" fill="#cce28c" stroke="#86a848" stroke-width="1"/><rect x="0.5" y="4.5" width="10" height="12" rx="1" fill="#b4d06c" stroke="#7a9c3c" stroke-width="1"/><rect x="2.5" y="6.5" width="6" height="8" fill="#d0e494"/></svg></div><div class="tl" style="left:58px;top:580px"><i>集</i><i>部</i>(41)</div>
<div class="xb" style="left:41px;top:606px"><b class="h"></b><b class="v"></b></div><div class="dh" style="left:51px;top:610px;width:6px"></div><div class="ic" style="left:57px;top:603px"><svg class="bk" width="15" height="17" viewBox="0 0 15 17"><rect x="5" y="0.5" width="9.5" height="12" rx="1" fill="#c4dc84" stroke="#86a848" stroke-width="1"/><rect x="3" y="2.5" width="9.5" height="12" rx="1" fill="#cce28c" stroke="#86a848" stroke-width="1"/><rect x="0.5" y="4.5" width="10" height="12" rx="1" fill="#b4d06c" stroke="#7a9c3c" stroke-width="1"/><rect x="2.5" y="6.5" width="6" height="8" fill="#d0e494"/></svg></div><div class="tl" style="left:77px;top:600px"><i>楚</i><i>辭</i><i>類</i>(1)</div>
<div class="xb" style="left:41px;top:626px"><b class="h"></b><b class="v"></b></div><div class="dh" style="left:51px;top:630px;width:6px"></div><div class="ic" style="left:57px;top:623px"><svg class="bk" width="15" height="17" viewBox="0 0 15 17"><rect x="5" y="0.5" width="9.5" height="12" rx="1" fill="#c4dc84" stroke="#86a848" stroke-width="1"/><rect x="3" y="2.5" width="9.5" height="12" rx="1" fill="#cce28c" stroke="#86a848" stroke-width="1"/><rect x="0.5" y="4.5" width="10" height="12" rx="1" fill="#b4d06c" stroke="#7a9c3c" stroke-width="1"/><rect x="2.5" y="6.5" width="6" height="8" fill="#d0e494"/></svg></div><div class="tl" style="left:77px;top:620px"><i>別</i><i>集</i><i>類</i>(22)</div>
<div class="xb" style="left:41px;top:646px"><b class="h"></b><b class="v"></b></div><div class="dh" style="left:51px;top:650px;width:6px"></div><div class="ic" style="left:57px;top:643px"><svg class="bk" width="15" height="17" viewBox="0 0 15 17"><rect x="5" y="0.5" width="9.5" height="12" rx="1" fill="#c4dc84" stroke="#86a848" stroke-width="1"/><rect x="3" y="2.5" width="9.5" height="12" rx="1" fill="#cce28c" stroke="#86a848" stroke-width="1"/><rect x="0.5" y="4.5" width="10" height="12" rx="1" fill="#b4d06c" stroke="#7a9c3c" stroke-width="1"/><rect x="2.5" y="6.5" width="6" height="8" fill="#d0e494"/></svg></div><div class="tl" style="left:77px;top:640px"><i>總</i><i>集</i><i>類</i>(13)</div>
<div class="xb" style="left:41px;top:666px"><b class="h"></b><b class="v"></b></div><div class="dh" style="left:51px;top:670px;width:6px"></div><div class="ic" style="left:57px;top:663px"><svg class="bk" width="15" height="17" viewBox="0 0 15 17"><rect x="5" y="0.5" width="9.5" height="12" rx="1" fill="#c4dc84" stroke="#86a848" stroke-width="1"/><rect x="3" y="2.5" width="9.5" height="12" rx="1" fill="#cce28c" stroke="#86a848" stroke-width="1"/><rect x="0.5" y="4.5" width="10" height="12" rx="1" fill="#b4d06c" stroke="#7a9c3c" stroke-width="1"/><rect x="2.5" y="6.5" width="6" height="8" fill="#d0e494"/></svg></div><div class="tl" style="left:77px;top:660px"><i>詩</i><i>文</i><i>評</i><i>類</i>(3)</div>
<div class="xb" style="left:41px;top:686px"><b class="h"></b><b class="v"></b></div><div class="dh" style="left:51px;top:690px;width:6px"></div><div class="ic" style="left:57px;top:683px"><svg class="bk" width="15" height="17" viewBox="0 0 15 17"><rect x="5" y="0.5" width="9.5" height="12" rx="1" fill="#c4dc84" stroke="#86a848" stroke-width="1"/><rect x="3" y="2.5" width="9.5" height="12" rx="1" fill="#cce28c" stroke="#86a848" stroke-width="1"/><rect x="0.5" y="4.5" width="10" height="12" rx="1" fill="#b4d06c" stroke="#7a9c3c" stroke-width="1"/><rect x="2.5" y="6.5" width="6" height="8" fill="#d0e494"/></svg></div><div class="tl" style="left:77px;top:680px"><i>詞</i><i>類</i>(1)</div>
<div class="xb" style="left:41px;top:706px"><b class="h"></b><b class="v"></b></div><div class="dh" style="left:51px;top:710px;width:6px"></div><div class="ic" style="left:57px;top:703px"><svg class="bk" width="15" height="17" viewBox="0 0 15 17"><rect x="5" y="0.5" width="9.5" height="12" rx="1" fill="#c4dc84" stroke="#86a848" stroke-width="1"/><rect x="3" y="2.5" width="9.5" height="12" rx="1" fill="#cce28c" stroke="#86a848" stroke-width="1"/><rect x="0.5" y="4.5" width="10" height="12" rx="1" fill="#b4d06c" stroke="#7a9c3c" stroke-width="1"/><rect x="2.5" y="6.5" width="6" height="8" fill="#d0e494"/></svg></div><div class="tl" style="left:77px;top:700px"><i>曲</i><i>類</i>(1)</div>
<div class="dh" style="left:8px;top:730px;width:10px"></div><div class="ic" style="left:18px;top:723px"><svg class="fd" width="17" height="15" viewBox="0 0 17 15"><path d="M0.5 2.5h6l1.5 2h8.5v10h-16z" fill="#e0b050" stroke="#b08030"/><rect x="1" y="5" width="15" height="9" fill="#f0c868"/><rect x="11" y="6" width="3" height="7" fill="#fff8e0"/></svg></div><div class="tl" style="left:39px;top:720px;font-size:14px"><i>書</i><i>籤</i></div>
<div class="dh" style="left:8px;top:750px;width:10px"></div><div class="ic" style="left:18px;top:743px"><svg class="fd" width="17" height="15" viewBox="0 0 17 15"><path d="M0.5 2.5h6l1.5 2h8.5v10h-16z" fill="#e0b050" stroke="#b08030"/><rect x="1" y="5" width="15" height="9" fill="#f0c868"/><rect x="11" y="6" width="3" height="7" fill="#fff8e0"/></svg></div><div class="tl" style="left:39px;top:740px;font-size:14px"><i>檢</i><i>索</i><i>歷</i><i>史</i></div>
<div id="lsb">
 <div class="sbb" style="top:1px;height:19px"><svg width="11" height="9" viewBox="0 0 11 9"><path d="M1 7l4.5-4.5L10 7" fill="none" stroke="#4d6185" stroke-width="2.2"/></svg></div>
 <div class="thumb" style="top:21px;height:672px"><div class="grip"></div></div>
 <div class="sbb" style="top:730px;height:20px"><svg width="11" height="9" viewBox="0 0 11 9"><path d="M1 2l4.5 4.5L10 2" fill="none" stroke="#4d6185" stroke-width="2.2"/></svg></div>
</div>
</div>
<div id="sep" class="a"></div>
<div id="tabs" class="a">
 <div class="tab on" style="left:-1px;top:4px;width:127px;height:30px"></div>
 <div class="tab off" style="left:126px;top:8px;width:104px;height:26px"></div>
 <div class="tab off" style="left:230px;top:8px;width:120px;height:26px"></div>
 <div class="tt" style="left:30px;top:10px;font-size:14px"><span class="w153"><i>檢</i><i>索</i><i>結</i><i>果</i></span></div>
 <div class="tt" style="left:160px;top:12px;font-size:14px"><span class="w15"><i>文</i><i>本</i></span></div>
 <div class="tt" style="left:257px;top:14px;font-size:15px"><span class="w175"><i>原</i><i>書</i><i>圖</i><i>像</i></span></div>
</div>
<div id="content" class="a"></div>
<div class="a" style="left:340px;top:114px;width:1092px;height:1px;background:#7e6444"></div>
<div id="head" class="a"><i>在</i><i>分</i><i>類</i><i>【</i><i>中</i><i>華</i><i>經</i><i>典</i><i>古</i><i>籍</i><i>庫</i><i>】</i><i>中</i><i>共</i><i>查</i><i>到</i>294<i>條</i><i>符</i><i>合</i><i>條</i><i>件</i>,<i>共</i>20<i>頁</i>,<i>當</i><i>前</i><i>是</i><i>第</i>1<i>頁</i></div>
<div class="a btn" style="left:370px;top:237px;width:91px"><i>下</i><i>一</i><i>頁</i></div>
<div class="a btn" style="left:462px;top:237px;width:90px"><i>末</i><i>尾</i><i>頁</i></div>
<div id="pg" class="a">1</div>
<div class="a btn" style="left:1308px;top:237px;width:91px"><i>跳</i><i>轉</i></div>
<div class="a" style="left:341px;top:863px;width:1090px;height:2px;background:#fcfbf2"></div>
<div class="a" style="left:341px;top:151px;width:1067px;height:712px;overflow:hidden">
<div class="rec a" style="left:29px;top:125px"><div class="r r1"><span class="tx" style="left:18px;color:#2222c8"><i>周</i><i>易</i><i>集</i><i>解</i><i>纂</i><i>疏</i></span></div><div class="r r2"><span class="tx" style="left:34px;color:#3c9a3c"><i>經</i><i>部</i>/<i>易</i><i>類</i></span></div><div class="r r3"><span class="tx" style="left:33px"><i>作</i><i>者</i><i>：</i></span><span class="tx" style="left:89px"><i>［</i><i>清</i><i>］</i><i>李</i><i>道</i><i>平</i> <i>撰</i></span><span class="tx" style="left:232px"><i>整</i><i>理</i><i>者</i><i>：</i><i>潘</i><i>雨</i><i>廷</i> <i>點</i><i>校</i></span></div><div class="r r3"><span class="tx" style="left:33px"><i>出</i><i>版</i><i>日</i><i>期</i><i>：</i>1994<i>年</i>3<i>月</i></span><span class="tx" style="left:217px"><i>版</i><i>次</i><i>：</i><i>第</i>1<i>版</i></span><span class="tx" style="left:337px"><i>出</i><i>版</i><i>社</i><i>：</i><i>中</i><i>華</i><i>書</i><i>局</i></span></div><div class="r r3"><span class="tx" style="left:34px"><i>叢</i><i>書</i><i>：</i><i>十</i><i>三</i><i>經</i><i>清</i><i>人</i><i>注</i><i>疏</i></span></div><div class="r r6"><div class="il" style="top:2px;left:34px"><i>简</i><i>介</i><i>：</i><i>本</i><i>書</i><i>共</i>10<i>卷</i><i>。</i><i>《</i><i>周</i><i>易</i><i>集</i><i>解</i><i>》</i><i>乃</i><i>唐</i><i>李</i><i>鼎</i><i>祚</i><i>所</i><i>撰</i><i>，</i><i>爲</i><i>唐</i><i>朝</i><i>後</i><i>保</i><i>存</i><i>漢</i><i>易</i><i>的</i><i>唯</i><i>一</i><i>文</i><i>獻</i><i>，</i><i>在</i><i>虞</i><i>翻</i><i>《</i><i>易</i><i>》</i><i>發</i><i>展</i><i>成</i><i>焦</i><i>循</i><i>《</i><i>易</i><i>學</i><i>三</i><i>書</i><i>》</i><i>的</i><i>過</i><i>程</i><i>中</i><i>起</i><i>到</i><i>了</i><i>承</i></div><div class="il" style="top:22px;left:1px"><i>啓</i><i>的</i><i>作</i><i>用</i><i>。</i><i>李</i><i>道</i><i>平</i><i>得</i><i>《</i><i>周</i><i>易</i><i>集</i><i>解</i><i>》</i><i>，</i><i>乃</i><i>于</i><i>全</i><i>書</i><i>之</i><i>注</i><i>，</i><i>逐</i><i>條</i><i>疏</i><i>通</i><i>之</i><i>，</i><i>其</i><i>間</i><i>漢</i><i>人</i><i>之</i><i>注</i><i>約</i><i>一</i><i>千</i><i>八</i><i>百</i><i>節</i><i>，</i><i>此</i><i>外</i><i>近</i><i>千</i><i>節</i><i>屬</i><i>魏</i><i>、</i><i>晉</i><i>至</i><i>唐</i><i>人</i><i>之</i><i>注</i><i>，</i><i>亦</i><i>爲</i><i>疏</i><i>通</i><i>，</i><i>又</i><i>加</i></div><div class="il" style="top:42px;left:1px"><i>百</i><i>餘</i><i>節</i><i>案</i><i>及</i><i>二</i><i>百</i><i>餘</i><i>節</i><i>愚</i><i>案</i><i>，</i><i>欲</i><i>使</i><i>注</i><i>者</i><i>之</i><i>義</i><i>，</i><i>以</i><i>合</i><i>諸</i><i>《</i><i>易</i><i>經</i><i>》</i><i>十</i><i>二</i><i>篇</i><i>之</i><i>旨</i><i>，</i><i>理</i><i>皆</i><i>平</i><i>穩</i><i>。</i><i>故</i><i>此</i><i>書</i><i>不</i><i>僅</i><i>屬</i><i>漢</i><i>易</i><i>，</i><i>亦</i><i>可</i><i>通</i><i>過</i><i>它</i><i>瞭</i><i>解</i><i>李</i><i>鼎</i><i>祚</i><i>之</i><i>思</i><i>想</i><i>。</i><i>本</i><i>書</i><i>以</i><i>三</i></div><div class="il" style="top:62px;left:1px"><i>餘</i><i>草</i><i>堂</i><i>刻</i><i>本</i><i>爲</i><i>底</i><i>本</i><i>，</i><i>參</i><i>校</i><i>《</i><i>湖</i><i>北</i><i>叢</i><i>書</i><i>》</i><i>本</i><i>與</i><i>陳</i><i>校</i><i>本</i><i>，</i><i>點</i><i>校</i><i>完</i><i>善</i><i>。</i></div></div></div>
<div class="rec a" style="left:29px;top:348px"><div class="r r1"><span class="tx" style="left:18px;color:#2222c8"><i>周</i><i>易</i><i>述</i></span></div><div class="r r2"><span class="tx" style="left:34px;color:#3c9a3c"><i>經</i><i>部</i>/<i>易</i><i>類</i></span></div><div class="r r3"><span class="tx" style="left:33px"><i>作</i><i>者</i><i>：</i></span><span class="tx" style="left:89px"><i>［</i><i>清</i><i>］</i><i>惠</i><i>棟</i> <i>撰</i></span><span class="tx" style="left:217px"><i>整</i><i>理</i><i>者</i><i>：</i><i>鄭</i><i>萬</i><i>耕</i> <i>點</i><i>校</i></span></div><div class="r r3"><span class="tx" style="left:33px"><i>出</i><i>版</i><i>日</i><i>期</i><i>：</i>2007<i>年</i>9<i>月</i></span><span class="tx" style="left:217px"><i>版</i><i>次</i><i>：</i><i>第</i>1<i>版</i></span><span class="tx" style="left:337px"><i>出</i><i>版</i><i>社</i><i>：</i><i>中</i><i>華</i><i>書</i><i>局</i></span></div><div class="r r3"><span class="tx" style="left:34px"><i>叢</i><i>書</i><i>：</i><i>易</i><i>學</i><i>典</i><i>籍</i><i>選</i><i>刊</i></span></div><div class="r r6"><div class="il" style="top:2px;left:34px"><i>简</i><i>介</i><i>：</i><i>本</i><i>書</i><i>共</i>23<i>卷</i><i>，</i><i>其</i><i>書</i><i>發</i><i>揚</i><i>家</i><i>學</i><i>之</i><i>風</i><i>，</i><i>篤</i><i>守</i><i>古</i><i>學</i><i>，</i><i>其</i><i>言</i><i>并</i><i>有</i><i>依</i><i>據</i><i>，</i><i>力</i><i>矯</i><i>空</i><i>疏</i><i>說</i><i>經</i><i>之</i><i>弊</i><i>。</i><i>本</i><i>書</i><i>內</i><i>容</i><i>以</i><i>荀</i><i>爽</i><i>、</i><i>虞</i><i>翻</i><i>爲</i><i>主</i><i>，</i><i>而</i><i>參</i><i>以</i><i>鄭</i><i>玄</i><i>、</i><i>宋</i><i>咸</i><i>、</i><i>干</i></div><div class="il" style="top:22px;left:1px"><i>寶</i><i>諸</i><i>家</i><i>之</i><i>說</i><i>，</i><i>自</i><i>爲</i><i>注</i><i>而</i><i>疏</i><i>之</i><i>。</i><i>本</i><i>書</i><i>一</i><i>切</i><i>唯</i><i>漢</i><i>易</i><i>是</i><i>從</i><i>，</i><i>不</i><i>敢</i><i>有</i><i>所</i><i>立</i><i>異</i><i>與</i><i>創</i><i>新</i><i>。</i><i>雖</i><i>然</i><i>本</i><i>書</i><i>爲</i><i>未</i><i>完</i><i>之</i><i>書</i><i>，</i><i>然</i><i>漢</i><i>儒</i><i>之</i><i>學</i><i>在</i><i>斷</i><i>絶</i><i>一</i><i>千</i><i>五</i><i>百</i><i>餘</i><i>年</i><i>後</i><i>，</i><i>因</i><i>此</i><i>書</i><i>得</i><i>以</i></div><div class="il" style="top:42px;left:1px"><i>復</i><i>明</i><i>。</i><i>此</i><i>書</i><i>在</i><i>《</i><i>易</i><i>》</i><i>的</i><i>研</i><i>究</i><i>上</i><i>有</i><i>很</i><i>大</i><i>功</i><i>勞</i><i>。</i><i>此</i><i>本</i><i>點</i><i>校</i><i>以</i><i>文</i><i>淵</i><i>閣</i><i>《</i><i>四</i><i>庫</i><i>全</i><i>書</i><i>》</i><i>本</i><i>爲</i><i>底</i><i>本</i><i>，</i><i>用</i><i>《</i><i>皇</i><i>清</i><i>經</i><i>解</i><i>》</i><i>本</i><i>參</i><i>校</i><i>，</i><i>引</i><i>文</i><i>均</i><i>用</i><i>引</i><i>號</i><i>標</i><i>出</i><i>，</i><i>眉</i><i>目</i><i>清</i><i>楚</i><i>，</i><i>十</i></div><div class="il" style="top:62px;left:1px"><i>分</i><i>實</i><i>用</i><i>。</i></div></div></div>
<div class="rec a" style="left:29px;top:571px"><div class="r r1"><span class="tx" style="left:18px;color:#2222c8"><i>易</i><i>漢</i><i>學</i></span></div><div class="r r2"><span class="tx" style="left:34px;color:#3c9a3c"><i>經</i><i>部</i>/<i>易</i><i>類</i></span></div><div class="r r3"><span class="tx" style="left:33px"><i>作</i><i>者</i><i>：</i></span><span class="tx" style="left:89px"><i>［</i><i>清</i><i>］</i><i>惠</i><i>棟</i> <i>撰</i></span><span class="tx" style="left:217px"><i>整</i><i>理</i><i>者</i><i>：</i><i>鄭</i><i>萬</i><i>耕</i> <i>點</i><i>校</i></span></div><div class="r r3"><span class="tx" style="left:33px"><i>出</i><i>版</i><i>日</i><i>期</i><i>：</i>2007<i>年</i>9<i>月</i></span><span class="tx" style="left:217px"><i>版</i><i>次</i><i>：</i><i>第</i>1<i>版</i></span><span class="tx" style="left:337px"><i>出</i><i>版</i><i>社</i><i>：</i><i>中</i><i>華</i><i>書</i><i>局</i></span></div><div class="r r3"><span class="tx" style="left:34px"><i>叢</i><i>書</i><i>：</i><i>易</i><i>學</i><i>典</i><i>籍</i><i>選</i><i>刊</i></span></div><div class="r r6"><div class="il" style="top:2px;left:34px"><i>简</i><i>介</i><i>：</i><i>本</i><i>書</i><i>共</i>8<i>卷</i><i>，</i><i>拾</i><i>掇</i><i>孟</i><i>喜</i><i>、</i><i>虞</i><i>翻</i><i>、</i><i>京</i><i>房</i><i>、</i><i>荀</i><i>爽</i><i>緒</i><i>論</i><i>，</i><i>鈎</i><i>稽</i><i>考</i><i>證</i><i>，</i><i>使</i><i>學</i><i>者</i><i>得</i><i>以</i><i>略</i><i>見</i><i>漢</i><i>易</i><i>之</i><i>門</i><i>徑</i><i>。</i><i>其</i><i>末</i><i>篇</i><i>附</i><i>以</i><i>己</i><i>意</i><i>，</i><i>則</i><i>闡</i><i>發</i><i>漢</i><i>易</i><i>之</i><i>理</i><i>，</i><i>以</i><i>辨</i><i>正</i></div><div class="il" style="top:22px;left:1px"><i>宋</i><i>易</i><i>之</i><i>非</i><i>。</i><i>本</i><i>書</i><i>以</i><i>《</i><i>四</i><i>庫</i><i>全</i><i>書</i><i>》</i><i>本</i><i>爲</i><i>底</i><i>本</i><i>，</i><i>以</i><i>《</i><i>皇</i><i>清</i><i>經</i><i>解</i><i>續</i><i>編</i><i>》</i><i>本</i><i>參</i><i>校</i><i>，</i><i>並</i><i>吸</i><i>收</i><i>前</i><i>人</i><i>研</i><i>究</i><i>成</i><i>果</i><i>，</i><i>點</i><i>校</i><i>精</i><i>審</i><i>，</i><i>是</i><i>研</i><i>究</i><i>漢</i><i>易</i><i>的</i><i>重</i><i>要</i><i>參</i><i>考</i><i>書</i><i>。</i></div></div></div>
</div>
<div id="rsb" class="a">
  <div class="sbb" style="top:1px;height:19px"><svg width="11" height="9" viewBox="0 0 11 9"><path d="M1 7l4.5-4.5L10 7" fill="none" stroke="#4d6185" stroke-width="2.2"/></svg></div>
  <div class="thumb" style="top:21px;height:138px"><div class="grip"></div></div>
  <div class="sbb" style="top:691px;height:20px"><svg width="11" height="9" viewBox="0 0 11 9"><path d="M1 2l4.5 4.5L10 2" fill="none" stroke="#4d6185" stroke-width="2.2"/></svg></div>
</div>
<div id="bottom" class="a"></div>
<div class="a" style="left:7px;top:114px;width:1px;height:751px;background:#9a7a48"></div>
<div class="a" style="left:1429px;top:151px;width:1px;height:714px;background:#ece6dc"></div>
<div class="a" style="left:1430px;top:151px;width:1px;height:714px;background:#fffff0"></div>
<div class="a" style="left:1431px;top:114px;width:1px;height:751px;background:#9a8050"></div>
<script>
(function(){var s=document.createElement('span');s.style.cssText='position:absolute;left:0;top:0;visibility:hidden;font-size:100px;white-space:nowrap;font-family:"Liberation Sans",sans-serif';s.textContent='\u4e2d\u83ef\u7d93\u5178';document.body.appendChild(s);var w=s.getBoundingClientRect().width;document.body.removeChild(s);if(w<370){document.documentElement.className+=' nocjk';}})();
</script>
</body></html>
